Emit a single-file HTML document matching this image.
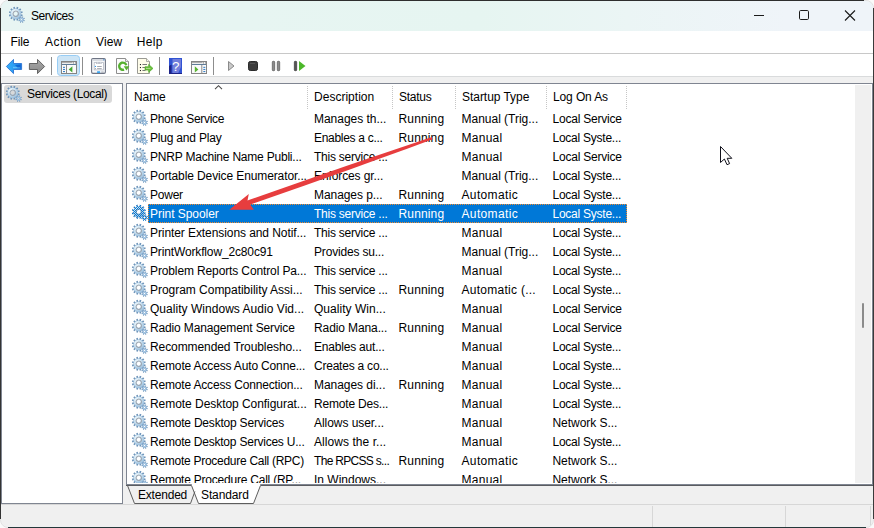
<!DOCTYPE html>
<html><head><meta charset="utf-8"><title>Services</title>
<style>
html,body{margin:0;padding:0;}
body{width:874px;height:528px;overflow:hidden;background:#fafafa;font-family:"Liberation Sans",sans-serif;font-size:12px;color:#000;position:relative;}
#win{position:absolute;left:0;top:0;width:872px;height:526px;border:1px solid #e2e2e2;border-radius:8px;background:#f0f0f0;overflow:hidden;}
.wb{position:absolute;background:#2e2e2e;}
#inner{position:absolute;left:-1px;top:-1px;width:874px;height:528px;}
.abs{position:absolute;}
.t{position:absolute;white-space:nowrap;line-height:19px;height:19px;}
.g{position:absolute;overflow:visible;}
#title{left:1px;top:1px;width:872px;height:30px;background:linear-gradient(90deg,#e8f5f3 0%,#e6f5f1 55%,#ebf5f5 72%,#eff4f9 90%,#eff4f9 100%);}
#menu{left:1px;top:31px;width:872px;height:22px;background:#fff;}
#menuline{left:1px;top:53px;width:872px;height:1px;background:#c8c8c8;}
#tool{left:1px;top:54px;width:872px;height:22px;background:#fff;}
#toolline{left:1px;top:76px;width:872px;height:1px;background:#d9dbdc;}
.pane{background:#fff;border:1px solid #7f8591;box-sizing:border-box;}
.sep{position:absolute;width:1px;background:repeating-linear-gradient(180deg,#c6c6c6 0,#c6c6c6 1px,#fff 1px,#fff 2px);top:86px;height:23px;}
.fh{height:1px;background:repeating-linear-gradient(90deg,#f08a30 0,#f08a30 1px,transparent 1px,transparent 2px);}
.fv{width:1px;background:repeating-linear-gradient(180deg,#f08a30 0,#f08a30 1px,transparent 1px,transparent 2px);}
.tsep{position:absolute;width:1px;background:#8d8d8d;top:57px;height:18px;}
</style></head><body>
<svg width="0" height="0" style="position:absolute">
<defs>
<radialGradient id="gearg" cx="5.500" cy="5" r="7.500" gradientUnits="userSpaceOnUse"><stop offset="0.25" stop-color="#e2f2fb"/><stop offset="1" stop-color="#98bddc"/></radialGradient>
<pattern id="dith" width="2" height="2" patternUnits="userSpaceOnUse"><rect x="0" y="0" width="1" height="1" fill="#0078d7"/><rect x="1" y="1" width="1" height="1" fill="#0078d7"/></pattern>
<g id="gear">
 <path d="M11.98 7.31L13.73 7.77L13.30 9.40L11.54 8.93L11.03 9.83L12.32 11.11L11.13 12.30L9.84 11.02L8.95 11.54L9.42 13.29L7.80 13.73L7.33 11.97L6.29 11.98L5.83 13.73L4.20 13.30L4.67 11.54L3.77 11.03L2.49 12.32L1.30 11.13L2.58 9.84L2.06 8.95L0.31 9.42L-0.13 7.80L1.63 7.33L1.62 6.29L-0.13 5.83L0.30 4.20L2.06 4.67L2.57 3.77L1.28 2.49L2.47 1.30L3.76 2.58L4.65 2.06L4.18 0.31L5.80 -0.13L6.27 1.63L7.31 1.62L7.77 -0.13L9.40 0.30L8.93 2.06L9.83 2.57L11.11 1.28L12.30 2.47L11.02 3.76L11.54 4.65L13.29 4.18L13.73 5.80L11.97 6.27ZM8.90 6.80A2.1 2.1 0 1 0 4.70 6.80A2.1 2.1 0 1 0 8.90 6.80Z" fill="#6f95ba" fill-rule="evenodd"/>
 <path d="M12.20 6.80A5.4 5.4 0 1 0 1.40 6.80A5.4 5.4 0 1 0 12.20 6.80ZM8.90 6.80A2.1 2.1 0 1 1 4.70 6.80A2.1 2.1 0 1 1 8.90 6.80Z" fill="url(#gearg)" fill-rule="evenodd"/>
 <circle cx="6.800" cy="6.800" r="2.800" fill="none" stroke="#8a8a90" stroke-width="0.900" opacity=".8"/>
 <path d="M14.78 12.92L15.82 13.34L15.40 14.34L14.37 13.90L13.91 14.37L14.35 15.40L13.35 15.81L12.93 14.77L12.28 14.78L11.86 15.82L10.86 15.40L11.30 14.37L10.83 13.91L9.80 14.35L9.39 13.35L10.43 12.93L10.42 12.28L9.38 11.86L9.80 10.86L10.83 11.30L11.29 10.83L10.85 9.80L11.85 9.39L12.27 10.43L12.92 10.42L13.34 9.38L14.34 9.80L13.90 10.83L14.37 11.29L15.40 10.85L15.81 11.85L14.77 12.27ZM13.40 12.60A0.8 0.8 0 1 0 11.80 12.60A0.8 0.8 0 1 0 13.40 12.60Z" fill="#6d93b8" fill-rule="evenodd"/>
 <path d="M14.90 12.60A2.3 2.3 0 1 0 10.30 12.60A2.3 2.3 0 1 0 14.90 12.60ZM13.40 12.60A0.8 0.8 0 1 1 11.80 12.60A0.8 0.8 0 1 1 13.40 12.60Z" fill="#a8c8e4" fill-rule="evenodd"/>
</g>
<g id="gearsel">
 <use href="#gear"/>
 <path d="M11.98 7.31L13.73 7.77L13.30 9.40L11.54 8.93L11.03 9.83L12.32 11.11L11.13 12.30L9.84 11.02L8.95 11.54L9.42 13.29L7.80 13.73L7.33 11.97L6.29 11.98L5.83 13.73L4.20 13.30L4.67 11.54L3.77 11.03L2.49 12.32L1.30 11.13L2.58 9.84L2.06 8.95L0.31 9.42L-0.13 7.80L1.63 7.33L1.62 6.29L-0.13 5.83L0.30 4.20L2.06 4.67L2.57 3.77L1.28 2.49L2.47 1.30L3.76 2.58L4.65 2.06L4.18 0.31L5.80 -0.13L6.27 1.63L7.31 1.62L7.77 -0.13L9.40 0.30L8.93 2.06L9.83 2.57L11.11 1.28L12.30 2.47L11.02 3.76L11.54 4.65L13.29 4.18L13.73 5.80L11.97 6.27ZM8.90 6.80A2.1 2.1 0 1 0 4.70 6.80A2.1 2.1 0 1 0 8.90 6.80Z" fill="url(#dith)" fill-rule="evenodd"/>
 <path d="M14.78 12.92L15.82 13.34L15.40 14.34L14.37 13.90L13.91 14.37L14.35 15.40L13.35 15.81L12.93 14.77L12.28 14.78L11.86 15.82L10.86 15.40L11.30 14.37L10.83 13.91L9.80 14.35L9.39 13.35L10.43 12.93L10.42 12.28L9.38 11.86L9.80 10.86L10.83 11.30L11.29 10.83L10.85 9.80L11.85 9.39L12.27 10.43L12.92 10.42L13.34 9.38L14.34 9.80L13.90 10.83L14.37 11.29L15.40 10.85L15.81 11.85L14.77 12.27ZM13.40 12.60A0.8 0.8 0 1 0 11.80 12.60A0.8 0.8 0 1 0 13.40 12.60Z" fill="url(#dith)" fill-rule="evenodd"/>
</g>
</defs></svg>
<div id="win"><div id="inner">

<div class="abs" id="title"></div>
<svg class="g" style="left:9px;top:7px" width="16" height="16" viewBox="0 0 16 16"><use href="#gear"/></svg>
<span class="t " style="left:31px;top:7px;letter-spacing:-0.454px;">Services</span>
<svg class="abs" style="left:730px;top:0" width="144" height="31" viewBox="0 0 144 31"><g stroke="#1a1a1a" stroke-width="1" fill="none"><path d="M24 15.500h10"/><rect x="69.5" y="10.5" width="9" height="9" rx="1.2"/><path d="M115 10.500l10 10M125 10.500l-10 10" stroke-width="1.100"/></g></svg>
<div class="abs" id="menu"></div><div class="abs" id="menuline"></div>
<span class="t " style="left:10.5px;top:33px;letter-spacing:-0.099px;">File</span>
<span class="t " style="left:45px;top:33px;letter-spacing:0.451px;">Action</span>
<span class="t " style="left:96px;top:33px;letter-spacing:0.126px;">View</span>
<span class="t " style="left:136.7px;top:33px;letter-spacing:0.392px;">Help</span>
<div class="abs" id="tool"></div><div class="abs" id="toolline"></div>
<svg class="abs" style="left:0;top:54px" width="320" height="23" viewBox="0 54 320 23">
<defs>
<linearGradient id="bl" x1="0" y1="0" x2="1" y2="0"><stop offset="0" stop-color="#38b0fa"/><stop offset="0.55" stop-color="#2a9af0"/><stop offset="1" stop-color="#1a72d8"/></linearGradient>
<linearGradient id="gr" x1="0" y1="0" x2="0" y2="1"><stop offset="0" stop-color="#a8a8a8"/><stop offset="1" stop-color="#8a8a8a"/></linearGradient>
<linearGradient id="hp" x1="0" y1="0" x2="0" y2="1"><stop offset="0" stop-color="#2a3fd0"/><stop offset="1" stop-color="#1c2a9a"/></linearGradient>
</defs>
<!-- back -->
<path d="M6.400 66.500L13.500 59.400V63.500H21.600V69.500H13.500V73.600Z" fill="url(#bl)" stroke="#2b74d4" stroke-width="0.900" stroke-linejoin="round"/>
<path d="M13 67.500h7" stroke="#7fd0ff" stroke-width="1.400" opacity=".65"/>
<path d="M15 65h5.500v2.500h-3z" fill="#0d5fcf" opacity=".8"/>
<!-- forward -->
<path d="M44.600 66.500L37.500 59.400V63.500H29.400V69.500H37.500V73.600Z" fill="url(#gr)" stroke="#585858" stroke-width="0.900" stroke-linejoin="round"/>
<rect x="51" y="57" width="1" height="18" fill="#8d8d8d"/>
<!-- selected button -->
<rect x="57.500" y="55.500" width="22" height="20" rx="3" fill="#cde5f6" stroke="#98cdf5"/>
<!-- console tree icon -->
<rect x="61.500" y="61.500" width="15" height="12" fill="#fafafa" stroke="#848484"/>
<rect x="62" y="62.400" width="14" height="1.500" fill="#ececec"/>
<rect x="62" y="62" width="10.500" height="0.900" fill="#a8a8a8"/>
<rect x="73" y="62.300" width="1" height="1.200" fill="#8a8a8a"/><rect x="75" y="62.300" width="1" height="1.200" fill="#8a8a8a"/>
<rect x="62" y="64" width="14" height="1" fill="#5f7c98"/>
<rect x="66" y="65" width="1" height="8" fill="#8a8a8a"/>
<rect x="63" y="66.800" width="2" height="1.100" fill="#3b82c8"/><rect x="63" y="68.900" width="2" height="1.100" fill="#3b82c8"/><rect x="63" y="71" width="2" height="1.100" fill="#3b82c8"/>
<path d="M72.400 66.300v6.200L68.700 69.400Z" fill="#45a835"/>
<rect x="82" y="57" width="1" height="18" fill="#8d8d8d"/>
<!-- properties -->
<rect x="91.600" y="58.600" width="13.800" height="14.800" rx="1.300" fill="#f7f8fa" stroke="#6e7484" stroke-width="1.100"/>
<rect x="92.300" y="59.300" width="12.400" height="1.700" fill="#d9dce2"/>
<rect x="103.300" y="59.200" width="1.200" height="1.200" fill="#3b82c8"/>
<rect x="94.200" y="62.600" width="9.200" height="7.300" fill="#fff" stroke="#b4b8c2" stroke-width=".8"/>
<rect x="96.500" y="62.200" width="2.300" height="1.500" fill="#fff" stroke="#b4b8c2" stroke-width=".6"/><rect x="99.300" y="62.200" width="2.300" height="1.500" fill="#fff" stroke="#b4b8c2" stroke-width=".6"/>
<rect x="94.900" y="65.900" width="1.100" height="1.100" fill="#2d9bf0"/><rect x="97.100" y="66" width="4.600" height="0.900" fill="#9a9ea8"/>
<rect x="94.900" y="68.200" width="1.100" height="1" fill="#9a9ea8"/><rect x="97.100" y="68.200" width="4.600" height="0.900" fill="#9a9ea8"/>
<rect x="97.100" y="71.300" width="3" height="1.600" fill="#2da0f0"/><rect x="101.200" y="71.500" width="2.600" height="1.300" fill="#b0b4bc"/>
<!-- refresh -->
<path d="M116.500 58.500H125.500L128.500 61.500V73.500H116.500Z" fill="#fcfcfc" stroke="#8e8e8e"/>
<path d="M125.500 58.500V61.500H128.500" fill="#ececec" stroke="#8e8e8e" stroke-width=".8"/>
<path d="M126.280 65.270A3.600 3.600 0 1 0 124.030 69.580" fill="none" stroke="#56b030" stroke-width="2.400"/>
<path d="M123.700 66.300H129.300L126.500 70.600Z" fill="#56b030"/>
<!-- export list -->
<path d="M137.500 58.500H146.500L149.500 61.500V73.500H137.500Z" fill="#fffdea" stroke="#9a9a94"/>
<path d="M146.500 58.500V61.500H149.500" fill="#f4f4ea" stroke="#9a9a94" stroke-width=".8"/>
<g fill="#222"><rect x="139.900" y="64" width="1.100" height="1.100"/><rect x="139.900" y="67" width="1.100" height="1.100"/><rect x="139.900" y="70" width="1.100" height="1.100"/></g>
<g fill="#6a6a6a"><rect x="142.400" y="64.100" width="4.600" height="0.900"/><rect x="142.400" y="67.100" width="3" height="0.900"/><rect x="142.400" y="70.100" width="3" height="0.900"/></g>
<path d="M145 66.700H148.600V64.300L153 68.400L148.600 72.500V70.100H145Z" fill="#66bd38" stroke="#4aa626" stroke-width=".6"/>
<path d="M146 68.400h4.500" stroke="#b4e08a" stroke-width="1"/>
<rect x="159" y="57" width="1" height="18" fill="#8d8d8d"/>
<!-- help -->
<rect x="169" y="58" width="13" height="16" fill="#3153d3"/>
<path d="M172.500 59H181V67L178 73.500H172.500Z" fill="#7d86dc" opacity=".85"/>
<path d="M169 66L171.500 64.500V74H169Z" fill="#1d2386"/>
<path d="M169 73h13v1h-13z" fill="#1d2386"/>
<text x="175.800" y="71.200" font-family="Liberation Sans, sans-serif" font-size="13.500" fill="#fff" text-anchor="middle">?</text>
<!-- action pane -->
<rect x="191.500" y="61.500" width="15" height="12" fill="#fafafa" stroke="#848484"/>
<rect x="192" y="62.400" width="14" height="1.500" fill="#ececec"/>
<rect x="192" y="62" width="10.500" height="0.900" fill="#a8a8a8"/>
<rect x="203" y="62.300" width="1" height="1.200" fill="#8a8a8a"/><rect x="205" y="62.300" width="1" height="1.200" fill="#8a8a8a"/>
<rect x="192" y="64" width="14" height="1" fill="#5f7c98"/>
<rect x="201.300" y="65" width="1" height="8" fill="#8a8a8a"/>
<rect x="203.300" y="66.800" width="2" height="1.100" fill="#3b82c8"/><rect x="203.300" y="68.900" width="2" height="1.100" fill="#3b82c8"/><rect x="203.300" y="71" width="2" height="1.100" fill="#3b82c8"/>
<path d="M194.800 66.300v6.200L198.400 69.400Z" fill="#58b430"/>
<rect x="213" y="57" width="1" height="18" fill="#8d8d8d"/>
<!-- play -->
<path d="M228.500 61.500V70.500L234 66Z" fill="#c9c9c9" stroke="#8a8a8a" stroke-width="1" stroke-linejoin="round"/>
<!-- stop -->
<rect x="248.500" y="61.500" width="9" height="9" rx="1.800" fill="#3c3c3c" stroke="#2a2a2a"/>
<path d="M250 63.500h5" stroke="#666" stroke-width="1" opacity=".6"/>
<!-- pause -->
<rect x="272.300" y="61.300" width="2.400" height="9.400" rx=".8" fill="#8a8a8a" stroke="#555" stroke-width=".7"/>
<rect x="277.300" y="61.300" width="2.400" height="9.400" rx=".8" fill="#8a8a8a" stroke="#555" stroke-width=".7"/>
<!-- restart -->
<rect x="294.300" y="61.300" width="2.400" height="9.400" rx=".8" fill="#555" stroke="#2c2c2c" stroke-width=".6"/>
<path d="M299 61V71L305.500 66Z" fill="#4cb82a"/>
</svg>

<div class="abs pane" style="left:1px;top:83px;width:122px;height:421px;"></div>
<div class="abs pane" style="left:126px;top:83px;width:747px;height:402px;"></div>
<div class="abs" style="left:4px;top:85px;width:108px;height:18px;background:#d9d9d9;border-radius:3px;"></div>
<svg class="g" style="left:6px;top:86px" width="16" height="16" viewBox="0 0 16 16"><use href="#gear"/></svg>
<span class="t " style="left:27px;top:85px;letter-spacing:-0.368px;">Services (Local)</span>
<div class="abs" style="left:855px;top:85px;width:16px;height:398px;background:#f0f0f0;"></div>
<div class="abs" style="left:862px;top:303px;width:2px;height:25px;background:#8b8b8b;border-radius:1px;"></div>
<span class="t " style="left:134px;top:88px;letter-spacing:-0.083px;">Name</span>
<span class="t " style="left:314px;top:88px;letter-spacing:0.019px;">Description</span>
<span class="t " style="left:399px;top:88px;letter-spacing:-0.259px;">Status</span>
<span class="t " style="left:462px;top:88px;letter-spacing:-0.043px;">Startup Type</span>
<span class="t " style="left:553px;top:88px;letter-spacing:-0.120px;">Log On As</span>
<div class="sep" style="left:307px"></div>
<div class="sep" style="left:392px"></div>
<div class="sep" style="left:455px"></div>
<div class="sep" style="left:546px"></div>
<div class="sep" style="left:626px"></div>
<svg class="abs" style="left:213px;top:84px" width="12" height="8" viewBox="0 0 12 8"><path d="M2 5.200L5.500 1.700L9 5.200" fill="none" stroke="#4a4a4a" stroke-width="1.100"/></svg>
<div class="abs" style="left:127px;top:108px;width:728px;height:375px;overflow:hidden;">
<svg class="g" style="left:5px;top:2px" width="16" height="16" viewBox="0 0 16 16"><use href="#gear"/></svg>
<span class="t " style="left:23px;top:2px;letter-spacing:-0.299px;">Phone Service</span>
<span class="t " style="left:187px;top:2px;letter-spacing:-0.031px;">Manages th...</span>
<span class="t " style="left:271.5px;top:2px;letter-spacing:0.150px;">Running</span>
<span class="t " style="left:334.5px;top:2px;letter-spacing:-0.010px;">Manual (Trig...</span>
<span class="t " style="left:425.5px;top:2px;letter-spacing:-0.210px;">Local Service</span>
<svg class="g" style="left:5px;top:21px" width="16" height="16" viewBox="0 0 16 16"><use href="#gear"/></svg>
<span class="t " style="left:23px;top:21px;letter-spacing:-0.197px;">Plug and Play</span>
<span class="t " style="left:187px;top:21px;letter-spacing:-0.301px;">Enables a c...</span>
<span class="t " style="left:271.5px;top:21px;letter-spacing:0.150px;">Running</span>
<span class="t " style="left:334.5px;top:21px;letter-spacing:0.265px;">Manual</span>
<span class="t " style="left:425.5px;top:21px;letter-spacing:-0.245px;">Local Syste...</span>
<svg class="g" style="left:5px;top:40px" width="16" height="16" viewBox="0 0 16 16"><use href="#gear"/></svg>
<span class="t " style="left:23px;top:40px;letter-spacing:-0.212px;">PNRP Machine Name Publi...</span>
<span class="t " style="left:187px;top:40px;letter-spacing:-0.232px;">This service ...</span>
<span class="t " style="left:334.5px;top:40px;letter-spacing:0.265px;">Manual</span>
<span class="t " style="left:425.5px;top:40px;letter-spacing:-0.210px;">Local Service</span>
<svg class="g" style="left:5px;top:59px" width="16" height="16" viewBox="0 0 16 16"><use href="#gear"/></svg>
<span class="t " style="left:23px;top:59px;letter-spacing:-0.112px;">Portable Device Enumerator...</span>
<span class="t " style="left:187px;top:59px;letter-spacing:-0.105px;">Enforces gr...</span>
<span class="t " style="left:334.5px;top:59px;letter-spacing:-0.010px;">Manual (Trig...</span>
<span class="t " style="left:425.5px;top:59px;letter-spacing:-0.245px;">Local Syste...</span>
<svg class="g" style="left:5px;top:78px" width="16" height="16" viewBox="0 0 16 16"><use href="#gear"/></svg>
<span class="t " style="left:23px;top:78px;letter-spacing:-0.230px;">Power</span>
<span class="t " style="left:187px;top:78px;letter-spacing:-0.070px;">Manages p...</span>
<span class="t " style="left:271.5px;top:78px;letter-spacing:0.150px;">Running</span>
<span class="t " style="left:334.5px;top:78px;letter-spacing:0.356px;">Automatic</span>
<span class="t " style="left:425.5px;top:78px;letter-spacing:-0.245px;">Local Syste...</span>
<div class="abs" style="left:21px;top:96px;width:479px;height:19px;background:#0078d7;"></div>
<div class="abs fh" style="left:21px;top:96px;width:479px;"></div><div class="abs fh" style="left:21px;top:114px;width:479px;"></div>
<div class="abs fv" style="left:21px;top:96px;height:19px;"></div><div class="abs fv" style="left:499px;top:96px;height:19px;"></div>
<svg class="g" style="left:5px;top:97px" width="16" height="16" viewBox="0 0 16 16"><use href="#gearsel"/></svg>
<span class="t " style="left:23px;top:97px;letter-spacing:-0.046px;color:#fff;">Print Spooler</span>
<span class="t " style="left:187px;top:97px;letter-spacing:-0.232px;color:#fff;">This service ...</span>
<span class="t " style="left:271.5px;top:97px;letter-spacing:0.150px;color:#fff;">Running</span>
<span class="t " style="left:334.5px;top:97px;letter-spacing:0.356px;color:#fff;">Automatic</span>
<span class="t " style="left:425.5px;top:97px;letter-spacing:-0.245px;color:#fff;">Local Syste...</span>
<svg class="g" style="left:5px;top:116px" width="16" height="16" viewBox="0 0 16 16"><use href="#gear"/></svg>
<span class="t " style="left:23px;top:116px;letter-spacing:-0.081px;">Printer Extensions and Notif...</span>
<span class="t " style="left:187px;top:116px;letter-spacing:-0.232px;">This service ...</span>
<span class="t " style="left:334.5px;top:116px;letter-spacing:0.265px;">Manual</span>
<span class="t " style="left:425.5px;top:116px;letter-spacing:-0.245px;">Local Syste...</span>
<svg class="g" style="left:5px;top:135px" width="16" height="16" viewBox="0 0 16 16"><use href="#gear"/></svg>
<span class="t " style="left:23px;top:135px;letter-spacing:-0.145px;">PrintWorkflow_2c80c91</span>
<span class="t " style="left:187px;top:135px;letter-spacing:-0.182px;">Provides su...</span>
<span class="t " style="left:334.5px;top:135px;letter-spacing:-0.010px;">Manual (Trig...</span>
<span class="t " style="left:425.5px;top:135px;letter-spacing:-0.245px;">Local Syste...</span>
<svg class="g" style="left:5px;top:154px" width="16" height="16" viewBox="0 0 16 16"><use href="#gear"/></svg>
<span class="t " style="left:23px;top:154px;letter-spacing:-0.125px;">Problem Reports Control Pa...</span>
<span class="t " style="left:187px;top:154px;letter-spacing:-0.232px;">This service ...</span>
<span class="t " style="left:334.5px;top:154px;letter-spacing:0.265px;">Manual</span>
<span class="t " style="left:425.5px;top:154px;letter-spacing:-0.245px;">Local Syste...</span>
<svg class="g" style="left:5px;top:173px" width="16" height="16" viewBox="0 0 16 16"><use href="#gear"/></svg>
<span class="t " style="left:23px;top:173px;letter-spacing:-0.029px;">Program Compatibility Assi...</span>
<span class="t " style="left:187px;top:173px;letter-spacing:-0.232px;">This service ...</span>
<span class="t " style="left:271.5px;top:173px;letter-spacing:0.150px;">Running</span>
<span class="t " style="left:334.5px;top:173px;letter-spacing:0.270px;">Automatic (...</span>
<span class="t " style="left:425.5px;top:173px;letter-spacing:-0.245px;">Local Syste...</span>
<svg class="g" style="left:5px;top:192px" width="16" height="16" viewBox="0 0 16 16"><use href="#gear"/></svg>
<span class="t " style="left:23px;top:192px;letter-spacing:0.034px;">Quality Windows Audio Vid...</span>
<span class="t " style="left:187px;top:192px;letter-spacing:0.031px;">Quality Win...</span>
<span class="t " style="left:334.5px;top:192px;letter-spacing:0.265px;">Manual</span>
<span class="t " style="left:425.5px;top:192px;letter-spacing:-0.210px;">Local Service</span>
<svg class="g" style="left:5px;top:211px" width="16" height="16" viewBox="0 0 16 16"><use href="#gear"/></svg>
<span class="t " style="left:23px;top:211px;letter-spacing:-0.142px;">Radio Management Service</span>
<span class="t " style="left:187px;top:211px;letter-spacing:-0.107px;">Radio Mana...</span>
<span class="t " style="left:271.5px;top:211px;letter-spacing:0.150px;">Running</span>
<span class="t " style="left:334.5px;top:211px;letter-spacing:0.265px;">Manual</span>
<span class="t " style="left:425.5px;top:211px;letter-spacing:-0.210px;">Local Service</span>
<svg class="g" style="left:5px;top:230px" width="16" height="16" viewBox="0 0 16 16"><use href="#gear"/></svg>
<span class="t " style="left:23px;top:230px;letter-spacing:-0.091px;">Recommended Troublesho...</span>
<span class="t " style="left:187px;top:230px;letter-spacing:-0.205px;">Enables aut...</span>
<span class="t " style="left:334.5px;top:230px;letter-spacing:0.265px;">Manual</span>
<span class="t " style="left:425.5px;top:230px;letter-spacing:-0.245px;">Local Syste...</span>
<svg class="g" style="left:5px;top:249px" width="16" height="16" viewBox="0 0 16 16"><use href="#gear"/></svg>
<span class="t " style="left:23px;top:249px;letter-spacing:-0.156px;">Remote Access Auto Conne...</span>
<span class="t " style="left:187px;top:249px;letter-spacing:-0.225px;">Creates a co...</span>
<span class="t " style="left:334.5px;top:249px;letter-spacing:0.265px;">Manual</span>
<span class="t " style="left:425.5px;top:249px;letter-spacing:-0.245px;">Local Syste...</span>
<svg class="g" style="left:5px;top:268px" width="16" height="16" viewBox="0 0 16 16"><use href="#gear"/></svg>
<span class="t " style="left:23px;top:268px;letter-spacing:-0.177px;">Remote Access Connection...</span>
<span class="t " style="left:187px;top:268px;letter-spacing:-0.047px;">Manages di...</span>
<span class="t " style="left:271.5px;top:268px;letter-spacing:0.150px;">Running</span>
<span class="t " style="left:334.5px;top:268px;letter-spacing:0.265px;">Manual</span>
<span class="t " style="left:425.5px;top:268px;letter-spacing:-0.245px;">Local Syste...</span>
<svg class="g" style="left:5px;top:287px" width="16" height="16" viewBox="0 0 16 16"><use href="#gear"/></svg>
<span class="t " style="left:23px;top:287px;letter-spacing:-0.049px;">Remote Desktop Configurat...</span>
<span class="t " style="left:187px;top:287px;letter-spacing:-0.191px;">Remote Des...</span>
<span class="t " style="left:334.5px;top:287px;letter-spacing:0.265px;">Manual</span>
<span class="t " style="left:425.5px;top:287px;letter-spacing:-0.245px;">Local Syste...</span>
<svg class="g" style="left:5px;top:306px" width="16" height="16" viewBox="0 0 16 16"><use href="#gear"/></svg>
<span class="t " style="left:23px;top:306px;letter-spacing:-0.206px;">Remote Desktop Services</span>
<span class="t " style="left:187px;top:306px;letter-spacing:-0.054px;">Allows user...</span>
<span class="t " style="left:334.5px;top:306px;letter-spacing:0.265px;">Manual</span>
<span class="t " style="left:425.5px;top:306px;letter-spacing:-0.046px;">Network S...</span>
<svg class="g" style="left:5px;top:325px" width="16" height="16" viewBox="0 0 16 16"><use href="#gear"/></svg>
<span class="t " style="left:23px;top:325px;letter-spacing:-0.221px;">Remote Desktop Services U...</span>
<span class="t " style="left:187px;top:325px;letter-spacing:0.056px;">Allows the r...</span>
<span class="t " style="left:334.5px;top:325px;letter-spacing:0.265px;">Manual</span>
<span class="t " style="left:425.5px;top:325px;letter-spacing:-0.245px;">Local Syste...</span>
<svg class="g" style="left:5px;top:344px" width="16" height="16" viewBox="0 0 16 16"><use href="#gear"/></svg>
<span class="t " style="left:23px;top:344px;letter-spacing:-0.275px;">Remote Procedure Call (RPC)</span>
<span class="t " style="left:187px;top:344px;letter-spacing:-0.688px;">The RPCSS s...</span>
<span class="t " style="left:271.5px;top:344px;letter-spacing:0.150px;">Running</span>
<span class="t " style="left:334.5px;top:344px;letter-spacing:0.356px;">Automatic</span>
<span class="t " style="left:425.5px;top:344px;letter-spacing:-0.046px;">Network S...</span>
<svg class="g" style="left:5px;top:363px" width="16" height="16" viewBox="0 0 16 16"><use href="#gear"/></svg>
<span class="t " style="left:23px;top:363px;letter-spacing:-0.224px;">Remote Procedure Call (RP...</span>
<span class="t " style="left:187px;top:363px;letter-spacing:-0.003px;">In Windows...</span>
<span class="t " style="left:334.5px;top:363px;letter-spacing:0.265px;">Manual</span>
<span class="t " style="left:425.5px;top:363px;letter-spacing:-0.046px;">Network S...</span>
</div>
<svg class="abs" style="left:120px;top:480px" width="160" height="28" viewBox="120 480 160 28">
<path d="M191.500 484.500L198.500 503.500H253.500L260.500 484.500Z" fill="#fff"/>
<path d="M192 485H260" stroke="#fff" stroke-width="2.200"/>
<path d="M126 485.500H191.500M260.500 485.500H280" fill="none" stroke="#5a5c60" stroke-width="1"/>
<path d="M127.500 485.500L134.500 503.500H190.500L194.900 491.500" fill="none" stroke="#5e5e5e" stroke-width="1"/>
<path d="M191.500 485.500L198.500 503.500H253.500L260.500 485.500" fill="none" stroke="#5e5e5e" stroke-width="1"/>
</svg>
<span class="t " style="left:138px;top:486px;letter-spacing:-0.204px;">Extended</span>
<span class="t " style="left:201px;top:486px;letter-spacing:-0.125px;">Standard</span>
<div class="abs" style="left:280px;top:485px;width:593px;height:1px;background:#5a5c60;"></div>
<div class="abs" style="left:1px;top:504px;width:872px;height:1px;background:#d7d7d7;"></div>
<div class="abs" style="left:652px;top:506px;width:1px;height:21px;background:#d7d7d7;"></div>
<div class="abs" style="left:785px;top:506px;width:1px;height:21px;background:#d7d7d7;"></div>
<div class="abs" style="left:870px;top:506px;width:1px;height:21px;background:#d7d7d7;"></div>
<svg class="abs" style="left:0;top:0" width="874" height="528" viewBox="0 0 874 528">
<path d="M431.92 137.11L406.11 145.69L379.41 154.69L349.05 164.96L303.20 180.95L246.01 201.01L247.59 205.54L304.78 185.47L350.58 169.31L380.70 158.37L407.17 148.71L432.68 139.29Z" fill="#e73d3e"/>
<path d="M229.300 209.700L248.800 194.100L247.500 200.600L250.200 204.600L253.900 209.700Z" fill="#e73d3e"/>
<path d="M720.500 146.500V162.500L724.400 159L727 164.700L729.600 163.600L727.200 158.300H731.800Z" fill="#fff" stroke="#10101a" stroke-width="1" stroke-linejoin="round"/>
</svg>
</div></div>
<div class="wb" style="left:8px;top:0;width:856px;height:1px;"></div><div class="wb" style="left:0;top:8px;width:1px;height:511px;background:#333;"></div><div class="wb" style="left:873px;top:8px;width:1px;height:511px;background:#3a3a3a;"></div><div class="wb" style="left:8px;top:527px;width:858px;height:1px;background:#24383a;"></div>
</body></html>
